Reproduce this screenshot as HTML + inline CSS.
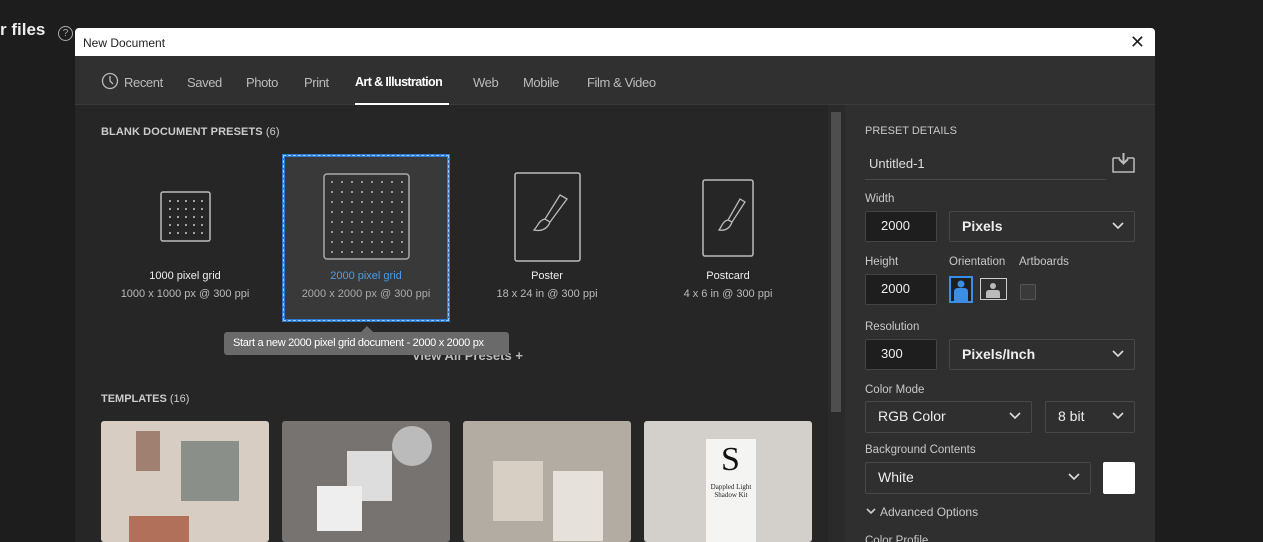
<!DOCTYPE html>
<html><head><style>
*{box-sizing:border-box;margin:0;padding:0}
html,body{width:1263px;height:542px;overflow:hidden}
body{background:#1d1d1d;font-family:"Liberation Sans",sans-serif;position:relative;color:#ddd}
.a{position:absolute}
.tab{position:absolute;top:75px;font-size:13px;letter-spacing:-0.4px;color:#bbb;white-space:nowrap}
.lbl{position:absolute;font-size:11.5px;color:#c8c8c8;white-space:nowrap}
.inp{position:absolute;background:#1e1e1e;border:1px solid #444;border-radius:2px;font-size:13px;color:#eee;padding-left:15px;line-height:28px}
.sel{position:absolute;border:1px solid #484848;border-radius:2px;font-size:14px;color:#eee;padding-left:12px;line-height:28px}
.sel svg{position:absolute;right:10px;top:10px}
.pn{position:absolute;text-align:center;width:180px;font-size:11px}
.pn b{display:block;font-weight:normal;color:#eee;margin-bottom:6px}
.pn span{color:#bbb}
</style></head><body>
<div class="a" style="left:0;top:20px;font-size:17px;font-weight:bold;color:#eee">r files</div>
<div class="a" style="left:58px;top:26px;width:15px;height:15px;border:1px solid #aaa;border-radius:50%;font-size:10px;text-align:center;line-height:13px;color:#aaa">?</div>
<div class="a" style="left:75px;top:28px;width:1080px;height:514px;background:#262626;border-radius:4px 4px 0 0;overflow:hidden">
 <div class="a" style="left:0;top:0;width:1080px;height:28px;background:#fff;color:#222;font-size:12px;padding:8px 0 0 8px">New Document</div>
 <div class="a" style="right:10px;top:4px;color:#222;font-size:18px">✕</div>
 <div class="a" style="left:0;top:28px;width:1080px;height:49px;background:#303030;border-bottom:1px solid #3a3a3a"></div>
 <div class="a" style="left:770px;top:77px;width:310px;height:440px;background:#2f2f2f"></div>
 <div class="a" style="left:753px;top:77px;width:17px;height:440px;background:#2a2a2a"></div>
 <div class="a" style="left:756px;top:84px;width:10px;height:300px;background:#4e4e4e"></div>
</div>
<svg class="a" style="left:101px;top:72px" width="18" height="18" viewBox="0 0 18 18"><circle cx="9" cy="9" r="7.5" fill="none" stroke="#bbb" stroke-width="1.3"/><path d="M9 4v5l3 3" fill="none" stroke="#bbb" stroke-width="1.3"/></svg>
<div class="tab" style="left:124px">Recent</div>
<div class="tab" style="left:187px">Saved</div>
<div class="tab" style="left:246px">Photo</div>
<div class="tab" style="left:304px">Print</div>
<div class="tab" style="left:355px;color:#fff;font-weight:bold;font-size:12.5px;letter-spacing:-0.6px">Art &amp; Illustration</div>
<div class="a" style="left:355px;top:103px;width:94px;height:2px;background:#fff"></div>
<div class="tab" style="left:473px">Web</div>
<div class="tab" style="left:523px">Mobile</div>
<div class="tab" style="left:587px">Film &amp; Video</div>

<div class="a" style="left:101px;top:126px;font-size:11px;color:#ccc;font-weight:bold;letter-spacing:.1px">BLANK DOCUMENT PRESETS <span style="font-weight:normal">(6)</span></div>
<svg class="a" style="left:160px;top:191px" width="51" height="51"><rect x="1" y="1" width="49" height="49" rx="2" fill="none" stroke="#bbb" stroke-width="1.5"/><g fill="#ccc"><circle cx="10" cy="10" r="1"/><circle cx="18" cy="10" r="1"/><circle cx="26" cy="10" r="1"/><circle cx="34" cy="10" r="1"/><circle cx="42" cy="10" r="1"/><circle cx="10" cy="18" r="1"/><circle cx="18" cy="18" r="1"/><circle cx="26" cy="18" r="1"/><circle cx="34" cy="18" r="1"/><circle cx="42" cy="18" r="1"/><circle cx="10" cy="26" r="1"/><circle cx="18" cy="26" r="1"/><circle cx="26" cy="26" r="1"/><circle cx="34" cy="26" r="1"/><circle cx="42" cy="26" r="1"/><circle cx="10" cy="34" r="1"/><circle cx="18" cy="34" r="1"/><circle cx="26" cy="34" r="1"/><circle cx="34" cy="34" r="1"/><circle cx="42" cy="34" r="1"/><circle cx="10" cy="42" r="1"/><circle cx="18" cy="42" r="1"/><circle cx="26" cy="42" r="1"/><circle cx="34" cy="42" r="1"/><circle cx="42" cy="42" r="1"/></g></svg>
<div class="pn" style="left:95px;top:270px"><b>1000 pixel grid</b><span>1000 x 1000 px @ 300 ppi</span></div>

<div class="a" style="left:282px;top:154px;width:168px;height:168px;background:#393939;border:3px solid #2d7ad6;outline:1px dashed #9cf;outline-offset:-2px"></div>
<svg class="a" style="left:323px;top:173px" width="87" height="87"><defs><pattern id="p" width="10" height="10" patternUnits="userSpaceOnUse" x="4" y="4"><circle cx="5" cy="5" r="1" fill="#bbb"/></pattern></defs><rect x="1" y="1" width="85" height="85" rx="3" fill="#333" stroke="#aaa" stroke-width="1.5"/><rect x="5" y="5" width="77" height="77" fill="url(#p)"/></svg>
<div class="pn" style="left:276px;top:270px"><b style="color:#4b9be8">2000 pixel grid</b><span style="color:#aaa">2000 x 2000 px @ 300 ppi</span></div>

<svg class="a" style="left:514px;top:172px" width="67" height="90"><rect x="1" y="1" width="65" height="88" rx="2" fill="none" stroke="#bbb" stroke-width="1.5"/><path d="M46 23 L53 27 L36 50 L31 47 Z M31 47 C25 48 24 54 20 58 C28 60 34 56 36 50" fill="none" stroke="#bbb" stroke-width="1.3"/></svg>
<div class="pn" style="left:457px;top:270px"><b>Poster</b><span>18 x 24 in @ 300 ppi</span></div>

<svg class="a" style="left:702px;top:179px" width="52" height="78"><rect x="1" y="1" width="50" height="76" rx="2" fill="none" stroke="#bbb" stroke-width="1.5"/><path d="M38 20 L43 23 L30 43 L26 41 Z M26 41 C21 42 20 47 17 51 C24 52 28 49 30 43" fill="none" stroke="#bbb" stroke-width="1.3"/></svg>
<div class="pn" style="left:638px;top:270px"><b>Postcard</b><span>4 x 6 in @ 300 ppi</span></div>

<div class="a" style="left:412px;top:348px;font-size:13px;color:#bbb;font-weight:bold;white-space:nowrap">View All Presets +</div>
<div class="a" style="left:361px;top:326px;width:0;height:0;border:6px solid transparent;border-bottom-color:#6a6a6a;border-top:0"></div>
<div class="a" style="left:224px;top:332px;width:285px;height:23px;background:#6a6a6a;border-radius:3px;font-size:11px;letter-spacing:-0.3px;color:#fff;line-height:23px;padding-left:9px;white-space:nowrap;overflow:hidden">Start a new 2000 pixel grid document - 2000 x 2000 px</div>

<div class="a" style="left:101px;top:393px;font-size:11px;color:#ccc;font-weight:bold">TEMPLATES <span style="font-weight:normal">(16)</span></div>
<div class="a" style="left:101px;top:421px;width:168px;height:121px;background:#d8cdc2;border-radius:3px;overflow:hidden"><div class="a" style="left:28px;top:95px;width:60px;height:30px;background:#b0705a"></div><div class="a" style="left:80px;top:20px;width:58px;height:60px;background:#8a8f8a"></div><div class="a" style="left:35px;top:10px;width:24px;height:40px;background:#a08070"></div></div>
<div class="a" style="left:282px;top:421px;width:168px;height:121px;background:#777370;border-radius:3px;overflow:hidden"><div class="a" style="left:65px;top:30px;width:45px;height:50px;background:#ddd"></div><div class="a" style="left:35px;top:65px;width:45px;height:45px;background:#eee"></div><div class="a" style="left:110px;top:5px;width:40px;height:40px;border-radius:50%;background:#bbb"></div></div>
<div class="a" style="left:463px;top:421px;width:168px;height:121px;background:#b3aca3;border-radius:3px;overflow:hidden"><div class="a" style="left:30px;top:40px;width:50px;height:60px;background:#d8cfc4"></div><div class="a" style="left:90px;top:50px;width:50px;height:70px;background:#e6e1da"></div></div>
<div class="a" style="left:644px;top:421px;width:168px;height:121px;background:#d3d0cc;border-radius:3px;overflow:hidden"><div class="a" style="left:62px;top:18px;width:50px;height:110px;background:#f4f4f2"></div><div class="a" style="left:77px;top:20px;font-family:'Liberation Serif',serif;font-size:34px;color:#111">S</div><div class="a" style="left:62px;top:62px;width:50px;font-family:'Liberation Serif',serif;font-size:7px;color:#222;text-align:center">Dappled Light Shadow Kit</div></div>

<div class="lbl" style="left:865px;top:125px;font-size:11px">PRESET DETAILS</div>
<div class="a" style="left:869px;top:156px;font-size:13px;color:#ddd">Untitled-1</div>
<div class="a" style="left:865px;top:179px;width:241px;height:1px;background:#4a4a4a"></div>
<svg class="a" style="left:1112px;top:152px" width="23" height="21"><path d="M1 6v14h21V6M8 6H1M22 6h-7" fill="none" stroke="#bbb" stroke-width="1.5"/><path d="M11.5 1v10M7 7l4.5 4.5L16 7" fill="none" stroke="#bbb" stroke-width="2"/></svg>
<div class="lbl" style="left:865px;top:193px">Width</div>
<div class="inp" style="left:865px;top:211px;width:72px;height:31px">2000</div>
<div class="sel" style="left:949px;top:211px;width:186px;height:31px;font-weight:bold">Pixels<svg width="12" height="8"><path d="M1 1l5 5 5-5" fill="none" stroke="#ddd" stroke-width="1.6"/></svg></div>
<div class="lbl" style="left:865px;top:256px">Height</div>
<div class="lbl" style="left:949px;top:256px">Orientation</div>
<div class="lbl" style="left:1019px;top:256px">Artboards</div>
<div class="inp" style="left:865px;top:274px;width:72px;height:31px">2000</div>
<div class="a" style="left:949px;top:276px;width:24px;height:27px;border:2px solid #3a8ee6;background:#1e1e1e"><svg width="20" height="23"><circle cx="10" cy="6" r="3.5" fill="#3a8ee6"/><path d="M3 23v-9q0-4 4-4h6q4 0 4 4v9z" fill="#3a8ee6"/></svg></div>
<div class="a" style="left:980px;top:278px;width:27px;height:22px;border:1.5px solid #ccc"><svg width="24" height="19"><circle cx="12" cy="7" r="3" fill="#bbb"/><path d="M5 19v-5q0-3 3-3h8q3 0 3 3v5z" fill="#bbb"/></svg></div>
<div class="a" style="left:1020px;top:284px;width:16px;height:16px;border:1px solid #555;border-radius:2px;background:#3a3a3a"></div>
<div class="lbl" style="left:865px;top:321px">Resolution</div>
<div class="inp" style="left:865px;top:339px;width:72px;height:31px">300</div>
<div class="sel" style="left:949px;top:339px;width:186px;height:31px;font-weight:bold">Pixels/Inch<svg width="12" height="8"><path d="M1 1l5 5 5-5" fill="none" stroke="#ddd" stroke-width="1.6"/></svg></div>
<div class="lbl" style="left:865px;top:384px">Color Mode</div>
<div class="sel" style="left:865px;top:401px;width:167px;height:32px">RGB Color<svg width="12" height="8"><path d="M1 1l5 5 5-5" fill="none" stroke="#ddd" stroke-width="1.6"/></svg></div>
<div class="sel" style="left:1045px;top:401px;width:90px;height:32px">8 bit<svg width="12" height="8"><path d="M1 1l5 5 5-5" fill="none" stroke="#ddd" stroke-width="1.6"/></svg></div>
<div class="lbl" style="left:865px;top:444px">Background Contents</div>
<div class="sel" style="left:865px;top:462px;width:226px;height:32px">White<svg width="12" height="8"><path d="M1 1l5 5 5-5" fill="none" stroke="#ddd" stroke-width="1.6"/></svg></div>
<div class="a" style="left:1103px;top:462px;width:32px;height:32px;background:#fff;border-radius:2px"></div>
<svg class="a" style="left:866px;top:508px" width="10" height="7"><path d="M1 1l4 4 4-4" fill="none" stroke="#ccc" stroke-width="1.6"/></svg>
<div class="lbl" style="left:880px;top:505px;font-size:12px">Advanced Options</div>
<div class="lbl" style="left:865px;top:535px">Color Profile</div>
</body></html>
